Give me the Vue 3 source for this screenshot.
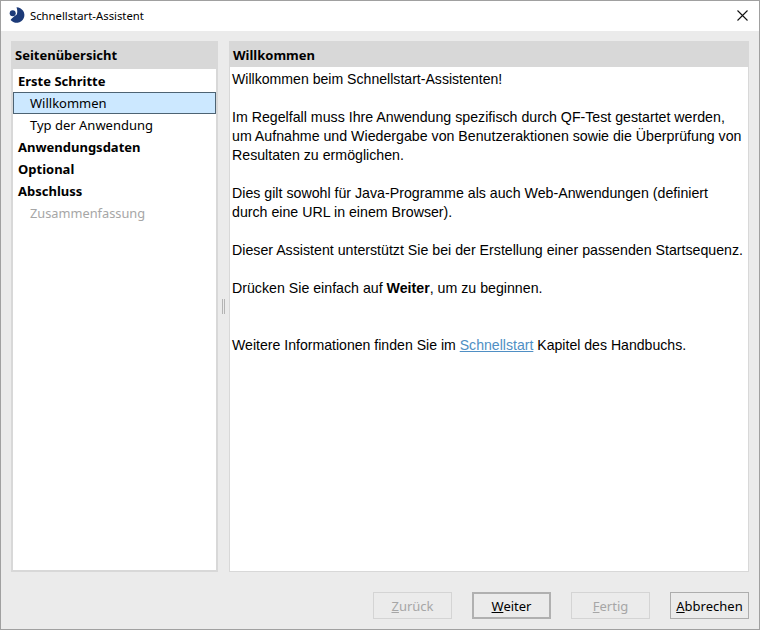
<script setup>
const tree = [
  { label: 'Erste Schritte', kind: 'group' },
  { label: 'Willkommen', kind: 'selected' },
  { label: 'Typ der Anwendung', kind: 'item' },
  { label: 'Anwendungsdaten', kind: 'group' },
  { label: 'Optional', kind: 'group' },
  { label: 'Abschluss', kind: 'group' },
  { label: 'Zusammenfassung', kind: 'disabled' },
]
</script>

<template>
  <div class="window">
    <header class="titlebar">
      <svg class="logo" width="16" height="16" viewBox="0 0 16 16">
        <path fill="#1c3a78" d="M7.500.200A7.800 7.800 0 1 1 1.600 13C2.500 11.600 3.500 10.800 5 9.500L7.800 7.500C8.600 5 8.300 2.500 7.500.200Z" />
        <circle fill="#1c3a78" cx="3.700" cy="6.200" r="3" />
      </svg>
      <span class="title">Schnellstart-Assistent</span>
      <svg class="close" width="11" height="11" viewBox="0 0 11 11">
        <path d="M.5.500l10 10M10.500.500l-10 10" stroke="#111" stroke-width="1.100" fill="none" />
      </svg>
    </header>

    <main class="content">
      <aside class="nav">
        <h2 class="nav-head">Seitenübersicht</h2>
        <ul class="tree">
          <li v-for="node in tree" :key="node.label" :class="['node', node.kind]">{{ node.label }}</li>
        </ul>
      </aside>

      <div class="splitter"><span class="grip"></span></div>

      <section class="page">
        <h2 class="page-head">Willkommen</h2>
        <div class="page-body">
          <p class="tight">Willkommen beim Schnellstart-Assistenten!</p>
          <p>Im Regelfall muss Ihre Anwendung spezifisch durch QF-Test gestartet werden,<br>um Aufnahme und Wiedergabe von Benutzeraktionen sowie die Überprüfung von<br>Resultaten zu ermöglichen.</p>
          <p>Dies gilt sowohl für Java-Programme als auch Web-Anwendungen (definiert<br>durch eine URL in einem Browser).</p>
          <p>Dieser Assistent unterstützt Sie bei der Erstellung einer passenden Startsequenz.</p>
          <p>Drücken Sie einfach auf <b>Weiter</b>, um zu beginnen.</p>
          <p class="more tight">Weitere Informationen finden Sie im <a class="link">Schnellstart</a> Kapitel des Handbuchs.</p>
        </div>
      </section>
    </main>

    <footer class="actions">
      <button class="btn" disabled><u>Z</u>urück</button>
      <button class="btn default"><u>W</u>eiter</button>
      <button class="btn" disabled><u>F</u>ertig</button>
      <button class="btn"><u>A</u>bbrechen</button>
    </footer>
  </div>
</template>

<style>
html, body { margin: 0; padding: 0; }
</style>

<style scoped>
.window {
  width: 760px;
  height: 630px;
  box-sizing: border-box;
  border: 1px solid #a0a0a0;
  background: #ebebeb;
  display: flex;
  flex-direction: column;
  font-family: "Noto Sans", sans-serif;
  color: #000;
  overflow: hidden;
}
.titlebar {
  height: 30px;
  flex: none;
  box-sizing: border-box;
  padding: 0 11px 2px 8px;
  background: #fff;
  display: flex;
  align-items: center;
}
.logo { flex: none; }
.title { margin-left: 5px; font-size: 11.3px; flex: 1; }
.close { flex: none; }
.content {
  flex: none;
  height: 531px;
  margin-top: 10px;
  padding: 0 10px;
  display: flex;
}
.nav {
  width: 207px;
  box-sizing: border-box;
  border: 2px solid #d8d8d8;
  border-top: 0;
  background: #fff;
  display: flex;
  flex-direction: column;
}
.nav-head {
  margin: 0 -2px;
  height: 28px;
  line-height: 28px;
  background: #d8d8d8;
  padding-left: 4px;
  font-size: 13px;
  font-weight: 700;
}
.tree { list-style: none; margin: 0; padding: 1px 0 0; }
.node {
  height: 22px;
  line-height: 22px;
  font-size: 13px;
  box-sizing: border-box;
  white-space: nowrap;
}
.group { font-weight: 700; padding-left: 5px; }
.item, .selected, .disabled { padding-left: 17px; }
.selected {
  background: #cce8ff;
  border: 1px solid #4d6373;
  padding-left: 16px;
  line-height: 20px;
}
.disabled { color: #a6a6a6; font-size: 12.8px; }
.splitter {
  width: 11px;
  flex: none;
  display: flex;
  align-items: center;
  justify-content: center;
}
.grip {
  width: 1px;
  height: 15px;
  margin-top: -1px;
  border-left: 1px solid #b4b4b4;
  border-right: 1px solid #b4b4b4;
}
.page {
  flex: 1;
  box-sizing: border-box;
  border: 1px solid #d8d8d8;
  border-top: 0;
  background: #fff;
  display: flex;
  flex-direction: column;
}
.page-head {
  margin: 0 -1px;
  height: 26px;
  line-height: 28px;
  background: #d8d8d8;
  padding-left: 4px;
  font-size: 13px;
  font-weight: 700;
}
.page-body {
  padding: 3px 0 0 2px;
  font-family: "Liberation Sans", Arial, sans-serif;
  font-size: 14.2px;
  line-height: 19px;
  white-space: nowrap;
}
.page-body p { margin: 0 0 19px; }
.page-body .tight { font-size: 14.1px; }
.page-body .more { margin-top: 38px; }
.link { color: #4f8fc4; text-decoration: underline; }
.actions {
  flex: 1;
  display: flex;
  justify-content: flex-end;
  align-items: flex-start;
  gap: 20px;
  padding: 20px 10px 0 0;
}
.btn {
  width: 79px;
  height: 27px;
  box-sizing: border-box;
  padding: 0;
  background: #ebebeb;
  border: 1px solid #adadad;
  font-family: "Noto Sans", sans-serif;
  font-size: 13px;
  color: #000;
}
.btn:disabled { color: #a6a6a6; border-color: #d4d4d4; }
.default { border: 2px solid #b0b0b0; }
</style>
